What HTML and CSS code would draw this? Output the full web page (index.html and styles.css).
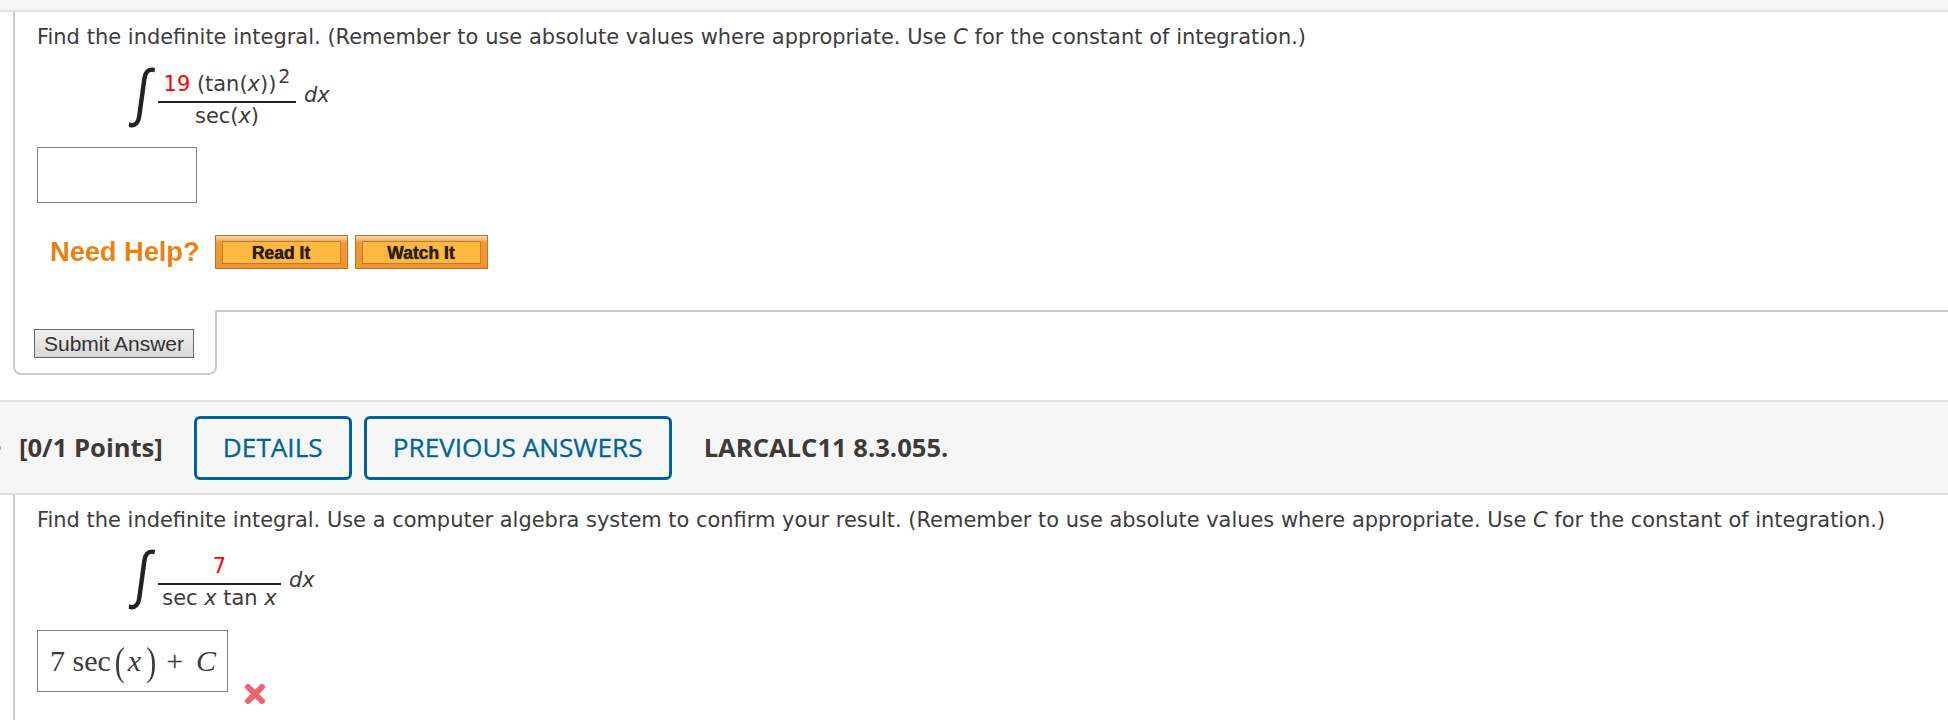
FILE: index.html
```html
<!DOCTYPE html>
<html lang="en">
<head>
    <meta charset="UTF-8">
    <title>Find the indefinite integral</title>
    <link rel="stylesheet" href="styles.css">
</head>
<body>
    <div class="top-band"></div>

    <div class="question">
        <p class="prompt">Find the indefinite integral. (Remember to use absolute values where appropriate. Use <i>C</i> for the constant of integration.)</p>
        <div class="formula">
            <span class="integral">∫</span>
            <div class="fraction wide">
                <div class="num"><span class="red">19</span> (tan(<i>x</i>))<sup>2</sup></div>
                <div class="den">sec(<i>x</i>)</div>
            </div>
            <span class="dx"><i>dx</i></span>
        </div>
        <div class="answer-box empty"></div>
        <div class="help-row">
            <span class="need-help">Need Help?</span>
            <button class="help-btn"><span>Read It</span></button>
            <button class="help-btn"><span>Watch It</span></button>
        </div>
    </div>

    <div class="submit-row">
        <div class="submit-tab">
            <button class="submit-btn">Submit Answer</button>
        </div>
        <div class="submit-rest"></div>
    </div>

    <div class="q-header">
        <span class="tick"></span>
        <span class="points">[0/1 Points]</span>
        <a class="chip">DETAILS</a>
        <a class="chip">PREVIOUS ANSWERS</a>
        <span class="q-code">LARCALC11 8.3.055.</span>
    </div>

    <div class="question second">
        <p class="prompt">Find the indefinite integral. Use a computer algebra system to confirm your result. (Remember to use absolute values where appropriate. Use <i>C</i> for the constant of integration.)</p>
        <div class="formula">
            <span class="integral">∫</span>
            <div class="fraction narrow">
                <div class="num"><span class="red">7</span></div>
                <div class="den">sec <i>x</i> tan <i>x</i></div>
            </div>
            <span class="dx"><i>dx</i></span>
        </div>
        <div class="answer-row">
            <div class="answer-box filled">7 sec<span class="paren open">(</span><i>x</i><span class="paren close">)</span><span class="plus">+</span><i>C</i></div>
            <svg class="wrong" width="22" height="22" viewBox="0 0 22 22">
                <path d="M4 4 L18 18 M18 4 L4 18" stroke="#f2636d" stroke-width="6" stroke-linecap="round" fill="none"/>
            </svg>
        </div>
    </div>
</body>
</html>
```

FILE: styles.css
```css
html, body {
    margin: 0;
    padding: 0;
    background-color: #fff;
}

body {
    font-family: "DejaVu Sans", Verdana, sans-serif;
    font-size: 20.95px;
    color: #3c3c3c;
    height: 720px;
    overflow: hidden;
}

.top-band {
    height: 10px;
    background-color: #f6f6f6;
    border-bottom: 2px solid #e2e2e2;
}

.question {
    margin-left: 13px;
    border-left: 2px solid #ccc;
    padding-left: 22px;
    height: 298px;
}

.prompt {
    margin: 0;
    padding-top: 13px;
    line-height: 24px;
    white-space: nowrap;
    word-spacing: 0.14px;
}

.second .prompt {
    word-spacing: 0;
}

.formula {
    display: flex;
    align-items: center;
    margin-left: 90px;
    margin-top: 16px;
    height: 66px;
}

.second .formula {
    margin-top: 15px;
}

.integral {
    display: block;
    font-family: "Liberation Sans", sans-serif;
    font-size: 66px;
    line-height: 66px;
    width: 31px;
    color: #222;
    transform: translate(5px, -6px) scale(0.75, 0.96) skewX(-10deg);
}

.fraction {
    text-align: center;
}

.fraction.wide {
    width: 138px;
}

.fraction.narrow {
    width: 123px;
}

.num {
    border-bottom: 2px solid #222;
    height: 32px;
    line-height: 30px;
    white-space: nowrap;
}

.den {
    height: 24px;
    line-height: 26px;
    white-space: nowrap;
}

sup {
    font-size: 19px;
    line-height: 0;
    margin-left: 2px;
}

.red {
    color: #f00;
}

.dx {
    margin-left: 8px;
    padding-bottom: 6px;
}

.second .dx {
    padding-bottom: 0;
}

.answer-box {
    border: 1px solid #808080;
    box-sizing: border-box;
}

.answer-box.empty {
    width: 160px;
    height: 56px;
    margin-top: 16px;
}

.help-row {
    display: flex;
    align-items: center;
    margin-top: 32px;
    height: 34px;
}

.need-help {
    font-family: "Liberation Sans", Arial, sans-serif;
    font-weight: bold;
    font-size: 27.2px;
    color: #ef7f0f;
    margin-left: 13px;
    margin-right: 15px;
    filter: blur(0.4px);
}

.help-btn {
    width: 133px;
    height: 34px;
    margin: 0 7px 0 0;
    padding: 5px 6px 4px;
    box-sizing: border-box;
    border: 1px solid #b87430;
    background: linear-gradient(#f8d9b0, #f3962f 22%, #f3962f);
}

.help-btn span {
    display: block;
    height: 100%;
    box-sizing: border-box;
    border: 1px solid #b97f36;
    background-color: #ffb940;
    font-family: "Liberation Sans", Arial, sans-serif;
    font-weight: bold;
    font-size: 17.5px;
    line-height: 22px;
    color: #2a1c05;
    text-shadow: 0 0 1px #2a1c05;
}

.submit-row {
    display: flex;
    height: 65px;
}

.submit-tab {
    margin-left: 13px;
    width: 204px;
    height: 65px;
    box-sizing: border-box;
    border: 2px solid #ccc;
    border-top: none;
    border-radius: 0 0 8px 8px;
    padding: 19px 0 0 19px;
}

.submit-rest {
    flex: 1;
    height: 0;
    border-top: 2px solid #ccc;
    margin-left: -2px;
}

.submit-btn {
    display: block;
    width: 160px;
    height: 29px;
    padding: 0;
    box-sizing: border-box;
    border: 1px solid #666;
    background: linear-gradient(#f0f0f0, #d8d8d8);
    font-family: "Liberation Sans", Arial, sans-serif;
    font-size: 21px;
    color: #333;
}

.q-header {
    display: flex;
    align-items: center;
    margin-top: 25px;
    height: 95px;
    box-sizing: border-box;
    background-color: #f6f6f6;
    border-top: 2px solid #e2e2e2;
    border-bottom: 2px solid #e2e2e2;
    font-family: "Open Sans", sans-serif;
}

.tick {
    width: 1px;
    height: 4px;
    margin-right: 18px;
    background-color: #9db9cd;
}

.points {
    font-weight: bold;
    font-size: 25.6px;
    color: #3d3a38;
    margin-right: 31px;
}

.chip {
    display: block;
    height: 64px;
    line-height: 56px;
    box-sizing: border-box;
    padding: 0 26px;
    margin-right: 12px;
    border: 3px solid #00649c;
    border-radius: 6px;
    font-size: 26.2px;
    color: #00649c;
    -webkit-text-stroke: 0.3px #00649c;
}

.q-code {
    font-weight: bold;
    font-size: 25.6px;
    color: #3d3a38;
    margin-left: 20px;
}

.question.second {
    height: 225px;
}

.answer-row {
    display: flex;
    align-items: flex-end;
    margin-top: 17px;
}

.answer-box.filled {
    width: 191px;
    height: 62px;
    line-height: 59px;
    padding-left: 12px;
    font-family: "Liberation Serif", serif;
    font-size: 30px;
    white-space: nowrap;
}

.paren {
    display: inline-block;
    transform: scale(1, 1.35);
}

.paren.open {
    margin: 0 3px 0 4px;
}

.paren.close {
    margin: 0 0 0 5px;
}

.plus {
    margin: 0 13px 0 10px;
}

.wrong {
    margin-left: 16px;
    margin-bottom: -13px;
}
```
